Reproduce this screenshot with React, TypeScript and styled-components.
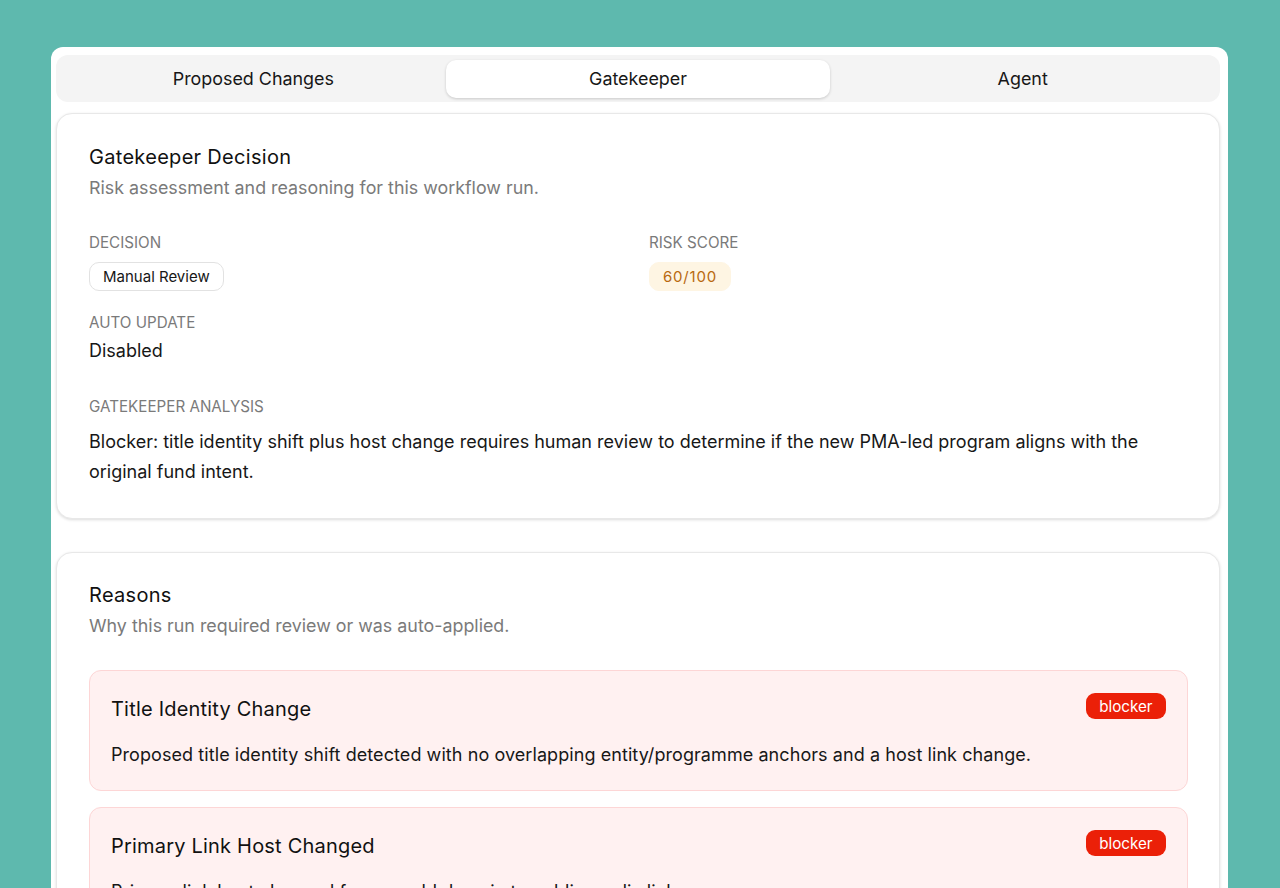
import React from "react";
import styled, { createGlobalStyle } from "styled-components";

const GlobalStyle = createGlobalStyle`
  html, body {
    margin: 0;
    height: 888px;
    overflow: hidden;
    background: #5eb9ae;
    font-family: "Inter", "Liberation Sans", sans-serif;
  }
`;

const Page = styled.div`
  padding: 47px 52px 0 51px;
  height: 888px;
  box-sizing: border-box;
  overflow: hidden;
`;

const Sheet = styled.div`
  background: #fff;
  border-radius: 12px 12px 0 0;
  padding: 8px 8px 0 5px;
  height: 900px;
  box-sizing: border-box;
`;

const TabBar = styled.div`
  display: grid;
  grid-template-columns: repeat(3, 1fr);
  background: #f4f4f4;
  border-radius: 12px;
  height: 47px;
  padding: 5px;
  box-sizing: border-box;
`;

const Tab = styled.div<{ $active?: boolean }>`
  display: flex;
  align-items: center;
  justify-content: center;
  height: 38px;
  padding-bottom: 2px;
  box-sizing: border-box;
  border-radius: 10px;
  font-size: 17.9px;
  color: #171717;
  background: ${(p) => (p.$active ? "#fff" : "transparent")};
  box-shadow: ${(p) => (p.$active ? "0 1px 3px rgba(0,0,0,0.18)" : "none")};
`;

const Card = styled.section`
  margin-top: 11px;
  background: #fff;
  border: 1px solid #e8e8e8;
  border-radius: 16px;
  box-shadow: 0 1px 3px rgba(0, 0, 0, 0.14);
  padding: 30px 31px 31px 32px;
  & + & {
    margin-top: 33px;
    padding-top: 29px;
  }
`;

const CardTitle = styled.h2`
  margin: 0;
  font-size: 20px;
  line-height: 26px;
  font-weight: 400;
  letter-spacing: 0.3px;
  color: #111;
`;

const CardSub = styled.p`
  margin: 5px 0 0;
  font-size: 17.85px;
  line-height: 26px;
  color: #7a7a7a;
`;

const FieldGrid = styled.div`
  display: grid;
  grid-template-columns: 1fr 1fr;
  column-gap: 21px;
  row-gap: 22px;
  margin-top: 32px;
`;

const FieldLabel = styled.div`
  font-size: 15.2px;
  line-height: 20px;
  color: #7a7a7a;
  text-transform: uppercase;
`;

const Pill = styled.span<{ $tone: "outline" | "amber" }>`
  display: flex;
  width: fit-content;
  align-items: center;
  height: 29px;
  margin-top: 9px;
  padding: 0 13px;
  box-sizing: border-box;
  border-radius: 10px;
  font-size: 15px;
  letter-spacing: ${(p) => (p.$tone === "amber" ? "0.8px" : "0")};
  color: ${(p) => (p.$tone === "amber" ? "#b8690f" : "#171717")};
  background: ${(p) => (p.$tone === "amber" ? "#fef5e3" : "#fff")};
  border: 1px solid ${(p) => (p.$tone === "amber" ? "#fef5e3" : "#e2e2e2")};
`;

const FieldValue = styled.div`
  margin-top: 5px;
  font-size: 18px;
  line-height: 26px;
  color: #171717;
`;

const AnalysisBlock = styled.div`
  margin-top: 33px;
`;

const AnalysisText = styled.p`
  margin: 10px 0 0;
  font-size: 18px;
  line-height: 30px;
  color: #171717;
`;

const ReasonList = styled.div`
  display: flex;
  flex-direction: column;
  gap: 16px;
  margin-top: 31px;
`;

const Reason = styled.div`
  background: #fff1f1;
  border: 1px solid #fdd6d6;
  border-radius: 12px;
  padding: 22px 21px 22px 21px;
`;

const ReasonHead = styled.div`
  display: flex;
  align-items: flex-start;
  justify-content: space-between;
`;

const ReasonTitle = styled.h3`
  margin: 0;
  font-size: 20px;
  line-height: 32px;
  font-weight: 400;
  letter-spacing: 0.2px;
  color: #111;
`;

const Badge = styled.span`
  display: inline-flex;
  align-items: center;
  height: 26px;
  padding: 0 13.5px;
  border-radius: 9px;
  background: #eb2008;
  color: #fff;
  font-size: 15.2px;
`;

const ReasonText = styled.p`
  margin: 17px 0 0;
  font-size: 18px;
  letter-spacing: 0.075px;
  line-height: 26px;
  color: #171717;
`;

const reasons = [
  {
    title: "Title Identity Change",
    text: "Proposed title identity shift detected with no overlapping entity/programme anchors and a host link change.",
  },
  {
    title: "Primary Link Host Changed",
    text: "Primary link host changed from an old domain to public media link.",
  },
];

export default function App() {
  return (
    <>
      <GlobalStyle />
      <Page>
        <Sheet>
          <TabBar>
            <Tab>Proposed Changes</Tab>
            <Tab $active>Gatekeeper</Tab>
            <Tab>Agent</Tab>
          </TabBar>
          <Card>
            <CardTitle>Gatekeeper Decision</CardTitle>
            <CardSub>Risk assessment and reasoning for this workflow run.</CardSub>
            <FieldGrid>
              <div>
                <FieldLabel>Decision</FieldLabel>
                <Pill $tone="outline">Manual Review</Pill>
              </div>
              <div>
                <FieldLabel>Risk Score</FieldLabel>
                <Pill $tone="amber">60/100</Pill>
              </div>
              <div>
                <FieldLabel>Auto Update</FieldLabel>
                <FieldValue>Disabled</FieldValue>
              </div>
            </FieldGrid>
            <AnalysisBlock>
              <FieldLabel>Gatekeeper Analysis</FieldLabel>
              <AnalysisText>
                Blocker: title identity shift plus host change requires human review to determine if the new PMA-led program aligns with the original fund intent.
              </AnalysisText>
            </AnalysisBlock>
          </Card>
          <Card>
            <CardTitle>Reasons</CardTitle>
            <CardSub>Why this run required review or was auto-applied.</CardSub>
            <ReasonList>
              {reasons.map((r) => (
                <Reason key={r.title}>
                  <ReasonHead>
                    <ReasonTitle>{r.title}</ReasonTitle>
                    <Badge>blocker</Badge>
                  </ReasonHead>
                  <ReasonText>{r.text}</ReasonText>
                </Reason>
              ))}
            </ReasonList>
          </Card>
        </Sheet>
      </Page>
    </>
  );
}
